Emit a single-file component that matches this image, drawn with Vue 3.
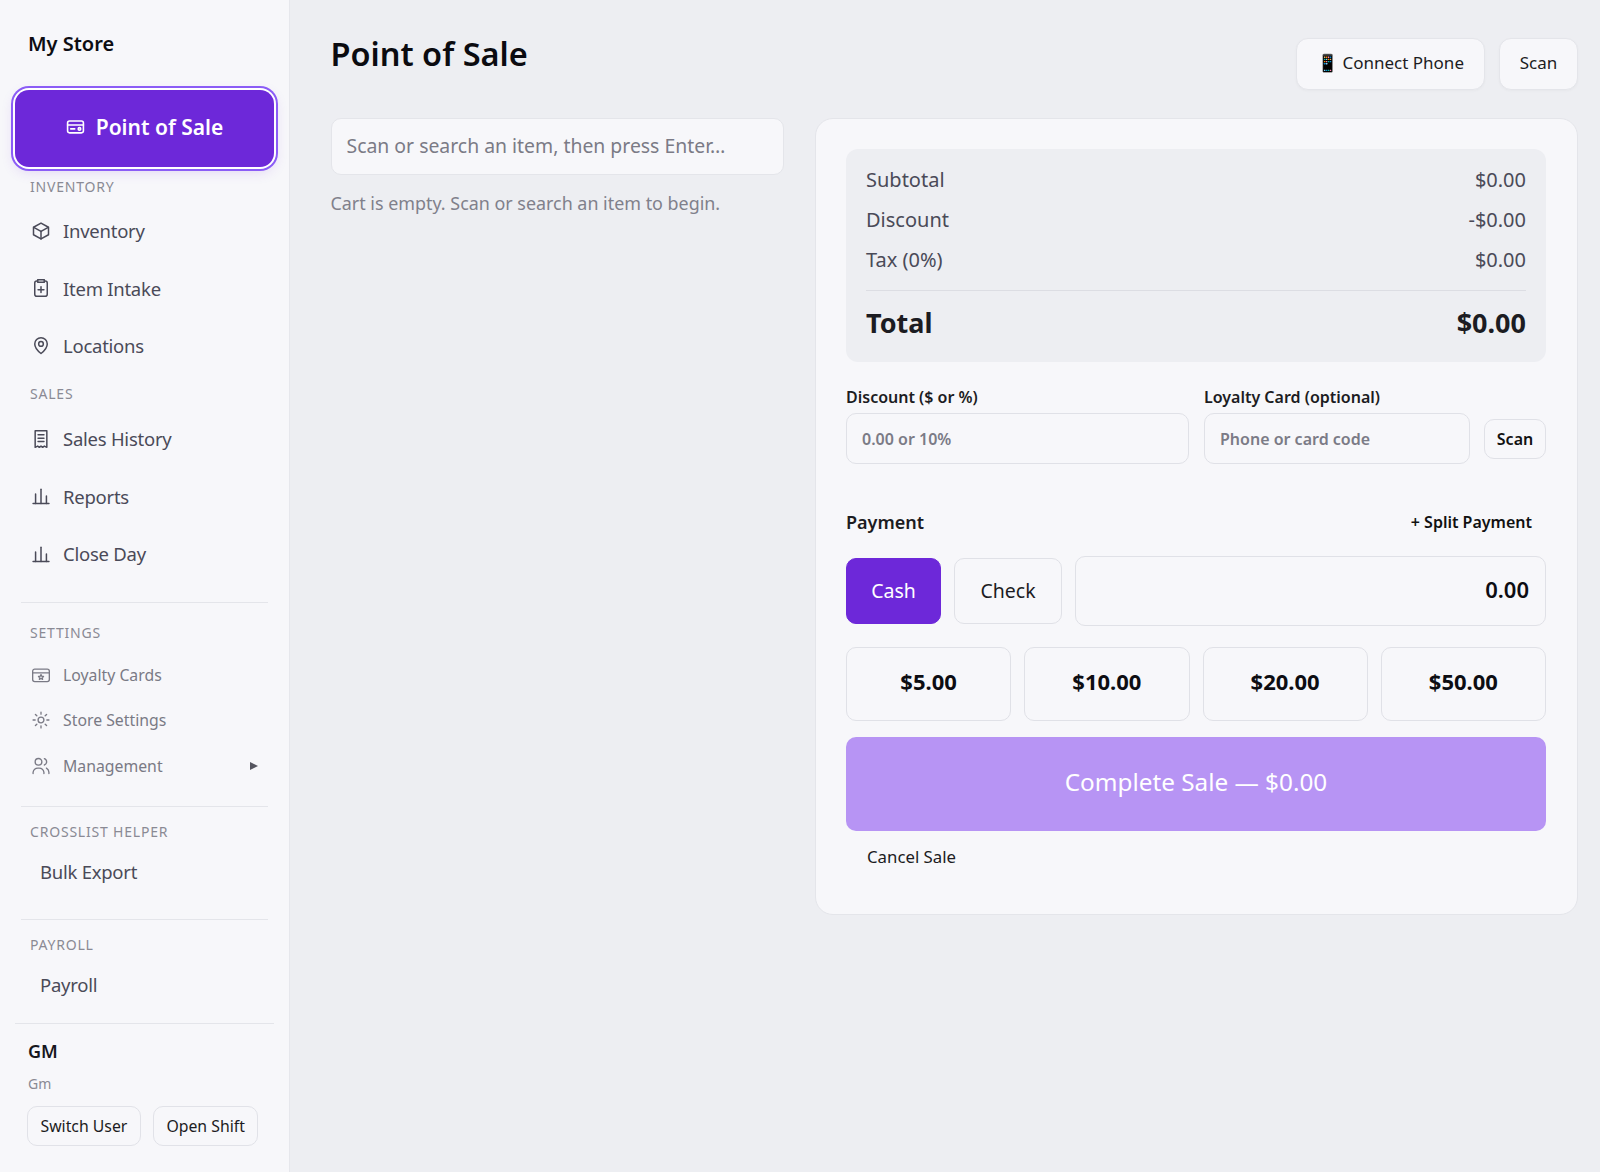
<template>
  <div class="app">
    <aside class="sidebar">
      <div class="brand">My Store</div>
      <a class="pos-btn">
        <svg class="pos-ico" viewBox="0 0 24 24" fill="none" stroke="currentColor" stroke-width="2" stroke-linecap="round" stroke-linejoin="round"><rect x="2" y="5" width="20" height="15" rx="2.5"/><path d="M2 10h20"/><path d="M6 15h5"/><circle cx="17" cy="15" r="1.6"/></svg>
        <span>Point of Sale</span>
      </a>

      <section class="g-inv">
        <div class="label">Inventory</div>
        <a class="item" v-for="i in inventory" :key="i.t">
          <svg class="ico" viewBox="0 0 24 24" fill="none" stroke="currentColor" stroke-width="1.8" stroke-linecap="round" stroke-linejoin="round"><path v-for="d in i.p" :key="d" :d="d"/></svg>
          <span>{{ i.t }}</span>
        </a>
      </section>

      <section class="g-sales">
        <div class="label">Sales</div>
        <a class="item" v-for="i in sales" :key="i.t">
          <svg class="ico" viewBox="0 0 24 24" fill="none" stroke="currentColor" stroke-width="1.8" stroke-linecap="round" stroke-linejoin="round"><path v-for="d in i.p" :key="d" :d="d"/></svg>
          <span>{{ i.t }}</span>
        </a>
      </section>

      <hr class="rule rule-a" />

      <section class="g-set">
        <div class="label">Settings</div>
        <a class="item small" v-for="i in settings" :key="i.t">
          <svg class="ico" viewBox="0 0 24 24" fill="none" stroke="currentColor" stroke-width="1.6" stroke-linecap="round" stroke-linejoin="round"><path v-for="d in i.p" :key="d" :d="d"/></svg>
          <span class="grow">{{ i.t }}</span>
          <i v-if="i.more" class="caret"></i>
        </a>
      </section>

      <hr class="rule rule-b" />

      <section class="g-plain">
        <div class="label">Crosslist Helper</div>
        <a class="item plain">Bulk Export</a>
      </section>

      <hr class="rule rule-c" />

      <section class="g-plain">
        <div class="label">Payroll</div>
        <a class="item plain">Payroll</a>
      </section>

      <footer class="user">
        <div class="user-name">GM</div>
        <div class="user-role">Gm</div>
        <div class="user-btns">
          <button class="mini">Switch User</button>
          <button class="mini">Open Shift</button>
        </div>
      </footer>
    </aside>

    <main class="main">
      <header class="top">
        <h1>Point of Sale</h1>
        <div class="top-btns">
          <button class="top-btn phone">📱 Connect Phone</button>
          <button class="top-btn scan">Scan</button>
        </div>
      </header>

      <div class="cols">
        <div class="left">
          <input class="search" placeholder="Scan or search an item, then press Enter…" />
          <p class="empty">Cart is empty. Scan or search an item to begin.</p>
        </div>

        <div class="panel">
          <div class="summary">
            <div class="row"><span>Subtotal</span><span>$0.00</span></div>
            <div class="row"><span>Discount</span><span>-$0.00</span></div>
            <div class="row"><span>Tax (0%)</span><span>$0.00</span></div>
            <div class="row total"><span>Total</span><span>$0.00</span></div>
          </div>

          <div class="fields">
            <label class="field f-disc">
              <span>Discount ($ or %)</span>
              <input class="inp" placeholder="0.00 or 10%" />
            </label>
            <label class="field f-loy">
              <span>Loyalty Card (optional)</span>
              <div class="loy-row">
                <input class="inp" placeholder="Phone or card code" />
                <button class="scan-sm">Scan</button>
              </div>
            </label>
          </div>

          <div class="pay-head">
            <span>Payment</span>
            <button class="split">+ Split Payment</button>
          </div>

          <div class="pay-row">
            <button class="tender active">Cash</button>
            <button class="tender check">Check</button>
            <div class="amount">0.00</div>
          </div>

          <div class="quick">
            <button v-for="q in quick" :key="q">{{ q }}</button>
          </div>

          <button class="complete">Complete Sale — $0.00</button>
          <button class="cancel">Cancel Sale</button>
        </div>
      </div>
    </main>
  </div>
</template>

<script setup>
const chart = ['M2.500 21h19', 'M5.500 21V9.500', 'M12 21V4', 'M18.500 21v-9']
const inventory = [
  { t: 'Inventory', p: ['M12 2.500l9 5v9l-9 5-9-5v-9z', 'M3.300 7.700L12 12.500l8.700-4.800', 'M12 12.500v9'] },
  { t: 'Item Intake', p: ['M8 3.500H7A2.500 2.500 0 0 0 4.500 6v13.500A2.500 2.500 0 0 0 7 22h10a2.500 2.500 0 0 0 2.500-2.500V6A2.500 2.500 0 0 0 17 3.500h-1', 'M8 2h8v3H8z', 'M12 10.500v7', 'M8.500 14h7'] },
  { t: 'Locations', p: ['M19.500 9.500c0 5.500-7.500 11.500-7.500 11.500s-7.500-6-7.500-11.500a7.500 7.500 0 0 1 15 0z', 'M12 6.700a2.800 2.800 0 1 0 0 5.600a2.800 2.800 0 1 0 0-5.600z'] }
]
const sales = [
  { t: 'Sales History', p: ['M5 2h14v20l-3-1.500-2 1.500-2-1.500-2 1.500-2-1.500L5 22z', 'M8.500 7h7', 'M8.500 11h7', 'M8.500 15h7'] },
  { t: 'Reports', p: chart },
  { t: 'Close Day', p: chart }
]
const settings = [
  { t: 'Loyalty Cards', p: ['M4.500 5h15A2.500 2.500 0 0 1 22 7.500v10a2.500 2.500 0 0 1-2.500 2.500h-15A2.500 2.500 0 0 1 2 17.500v-10A2.500 2.500 0 0 1 4.500 5z', 'M2 9.500h20', 'M12 11.500l1 2 2 .3-1.500 1.400.4 2-1.900-1-1.900 1 .4-2L9 13.800l2-.3z'] },
  { t: 'Store Settings', p: ['M12 8.500a3.500 3.500 0 1 0 0 7a3.500 3.500 0 1 0 0-7z', 'M12 2.500v2.500', 'M12 19v2.500', 'M2.500 12H5', 'M19 12h2.500', 'M5.300 5.300L7 7', 'M17 17l1.700 1.700', 'M5.300 18.700L7 17', 'M17 7l1.700-1.700'] },
  { t: 'Management', more: true, p: ['M9 3a4 4 0 1 0 0 8a4 4 0 1 0 0-8z', 'M2.500 21v-1.500a6 6 0 0 1 6-5h1a6 6 0 0 1 6 5V21', 'M16 3.200a4 4 0 0 1 0 7.600', 'M18.500 14.500a6 6 0 0 1 3 5V21'] }
]
const quick = ['$5.00', '$10.00', '$20.00', '$50.00']
</script>

<style>
html, body { margin: 0; background: #edeef2; }
</style>

<style scoped>
* { box-sizing: border-box; }
.app {
  display: flex;
  min-height: 1172px;
  font-family: "Noto Sans", "Open Sans", sans-serif;
  color: #1c1c22;
  background: #edeef2;
}
button { font-family: inherit; cursor: pointer; }
input { font-family: inherit; outline: none; }
input::placeholder { color: #7b7b86; opacity: 1; }

/* sidebar */
.sidebar {
  width: 290px;
  flex: none;
  background: #f7f7fa;
  border-right: 1px solid #e6e7ec;
  display: flex;
  flex-direction: column;
}
.brand {
  height: 90px;
  padding: 0 0 4px 28px;
  display: flex;
  align-items: center;
  font-size: 20px;
  font-weight: 600;
  color: #0d0d12;
}
.pos-btn {
  height: 77px;
  padding-bottom: 4px;
  margin: 0 15px;
  border-radius: 14px;
  background: #6d28d9;
  color: #fff;
  display: flex;
  align-items: center;
  justify-content: center;
  gap: 11px;
  font-size: 21px;
  font-weight: 600;
  box-shadow: 0 0 0 2px #fff, 0 0 0 4px #8b5cf6, 0 4px 14px rgba(109, 40, 217, .18);
}
.pos-ico { width: 19px; height: 19px; }
.label {
  height: 18px;
  line-height: 18px;
  margin-left: 30px;
  font-size: 14px;
  letter-spacing: .8px;
  color: #8a8a94;
  text-transform: uppercase;
}
.item {
  height: 57.5px;
  padding: 0 0 2px 31px;
  display: flex;
  align-items: center;
  gap: 12px;
  font-size: 18.5px;
  letter-spacing: -.25px;
  color: #4a4a58;
}
.ico { width: 20px; height: 20px; flex: none; }
.g-inv { margin-top: 10.5px; }
.g-sales { margin-top: 9.5px; }
.g-inv .label { margin-bottom: 7.5px; }
.g-sales .label { margin-bottom: 8px; }
.rule { height: 1px; margin: 0 21px; border: 0; background: #e4e5ea; }
.rule-a { margin-top: 18.5px; }
.rule-b { margin-top: 16px; }
.rule-c { margin-top: 24px; }
.g-set { margin-top: 21px; }
.g-set .label { margin-bottom: 11px; }
.item.small {
  height: 45.5px;
  font-size: 15.8px;
  letter-spacing: 0;
  color: #7a7a85;
  padding-right: 31px;
}
.grow { flex: 1; }
.caret {
  width: 0; height: 0;
  border-left: 8px solid #55555f;
  border-top: 4.5px solid transparent;
  border-bottom: 4.5px solid transparent;
}
.g-plain { margin-top: 16px; }
.g-plain .label { margin-bottom: 10px; }
.item.plain { height: 44px; padding-left: 40px; }
.user {
  margin: 15px 15px 0;
  padding: 15px 0 0 13px;
  border-top: 1px solid #e4e5ea;
}
.user-name { font-size: 18px; font-weight: 600; line-height: 24px; color: #16161c; }
.user-role { margin-top: 11px; font-size: 14px; line-height: 20px; color: #8a8a94; }
.user-btns { margin-top: 12px; margin-left: -1px; display: flex; gap: 12px; }
.mini {
  height: 40px;
  padding: 0 12.5px;
  border: 1px solid #e1e2e8;
  border-radius: 10px;
  background: #f7f7fa;
  color: #1c1c22;
  font-size: 15.8px;
}

/* main */
.main { flex: 1; min-width: 0; padding: 0 22px 0 40.5px; }
.top {
  height: 118px;
  display: flex;
  justify-content: space-between;
  align-items: flex-start;
}
h1 {
  margin: 32px 0 0;
  font-size: 32.5px;
  line-height: 44px;
  font-weight: 600;
  color: #0b0b10;
}
.top-btns { display: flex; gap: 14px; margin-top: 38px; }
.top-btn {
  height: 52px;
  padding: 0 0 4px;
  border: 1px solid #e4e5ea;
  border-radius: 12px;
  background: #f7f7fa;
  color: #1c1c22;
  font-size: 17px;
  box-shadow: 0 1px 3px rgba(20, 20, 40, .03);
}
.phone { width: 189px; }
.scan { width: 79px; }
.cols { display: flex; gap: 31px; align-items: flex-start; }
.left { width: 453.5px; flex: none; }
.search {
  width: 100%;
  height: 57px;
  padding: 0 15px 2px;
  border: 1px solid #e4e5ea;
  border-radius: 10px;
  background: #f7f7fa;
  font-size: 19.4px;
}
.empty { margin: 15px 0 0; font-size: 17.9px; line-height: 26px; color: #80808b; }
.panel {
  flex: 1;
  height: 797px;
  padding: 30px 31px 0 30px;
  background: #f7f7fa;
  border: 1px solid #e4e5ea;
  border-radius: 18px;
}
.summary {
  height: 213px;
  padding: 11px 20px 0;
  border-radius: 12px;
  background: #edeef2;
}
.row {
  height: 40px;
  padding-bottom: 1px;
  display: flex;
  justify-content: space-between;
  align-items: center;
  font-size: 20px;
  color: #4a4a58;
}
.total {
  height: 70px;
  margin-top: 10px;
  padding-bottom: 6px;
  border-top: 1px solid #dcdde3;
  font-size: 27px;
  font-weight: 700;
  color: #1c1c22;
}
.fields { margin-top: 24px; display: flex; gap: 15px; }
.f-disc { width: 343px; flex: none; }
.f-loy { flex: 1; }
.field > span {
  display: block;
  height: 22px;
  line-height: 22px;
  margin-bottom: 5px;
  font-size: 16px;
  font-weight: 600;
  color: #1c1c22;
}
.inp {
  width: 100%;
  height: 51px;
  padding: 0 15px;
  border: 1px solid #e0e1e7;
  border-radius: 10px;
  background: #f7f7fa;
  font-size: 16px;
  font-weight: 600;
}
.loy-row { display: flex; align-items: center; gap: 14px; }
.loy-row .inp { flex: 1; min-width: 0; }
.scan-sm {
  width: 62px;
  height: 40px;
  flex: none;
  padding: 0;
  border: 1px solid #e0e1e7;
  border-radius: 10px;
  background: #f7f7fa;
  color: #111;
  font-size: 16px;
  font-weight: 600;
}
.pay-head {
  margin-top: 44px;
  height: 28px;
  display: flex;
  justify-content: space-between;
  align-items: center;
  font-size: 18px;
  font-weight: 600;
}
.split {
  margin-right: 14px;
  padding: 0;
  border: 0;
  background: none;
  color: #111;
  font-size: 16px;
  font-weight: 600;
}
.pay-row { margin-top: 20px; display: flex; align-items: center; gap: 13px; }
.tender {
  height: 66px;
  flex: none;
  padding: 0 0 1px;
  border: 1px solid #e0e1e7;
  border-radius: 10px;
  background: #f7f7fa;
  color: #1c1c22;
  font-size: 19.5px;
}
.tender.active { width: 95px; background: #6d28d9; border-color: #6d28d9; color: #fff; }
.tender.check { width: 108px; }
.amount {
  flex: 1;
  height: 70px;
  padding: 0 16px 4px 0;
  display: flex;
  align-items: center;
  justify-content: flex-end;
  border: 1px solid #e0e1e7;
  border-radius: 10px;
  font-size: 22px;
  font-weight: 600;
  color: #0d0d12;
}
.quick { margin-top: 21px; display: grid; grid-template-columns: repeat(4, 1fr); gap: 13px; }
.quick button {
  height: 74px;
  padding: 0 0 7px;
  border: 1px solid #e0e1e7;
  border-radius: 10px;
  background: #f7f7fa;
  color: #0d0d12;
  font-size: 22px;
  font-weight: 700;
}
.complete {
  display: block;
  width: 100%;
  height: 94px;
  margin-top: 16px;
  padding: 0 0 5px;
  border: 0;
  border-radius: 10px;
  background: #b794f4;
  color: #fff;
  font-size: 24.3px;
}
.cancel {
  display: block;
  margin-top: 10px;
  padding: 0 21px;
  height: 30px;
  border: 0;
  background: none;
  color: #1c1c22;
  font-size: 16.8px;
}
</style>
